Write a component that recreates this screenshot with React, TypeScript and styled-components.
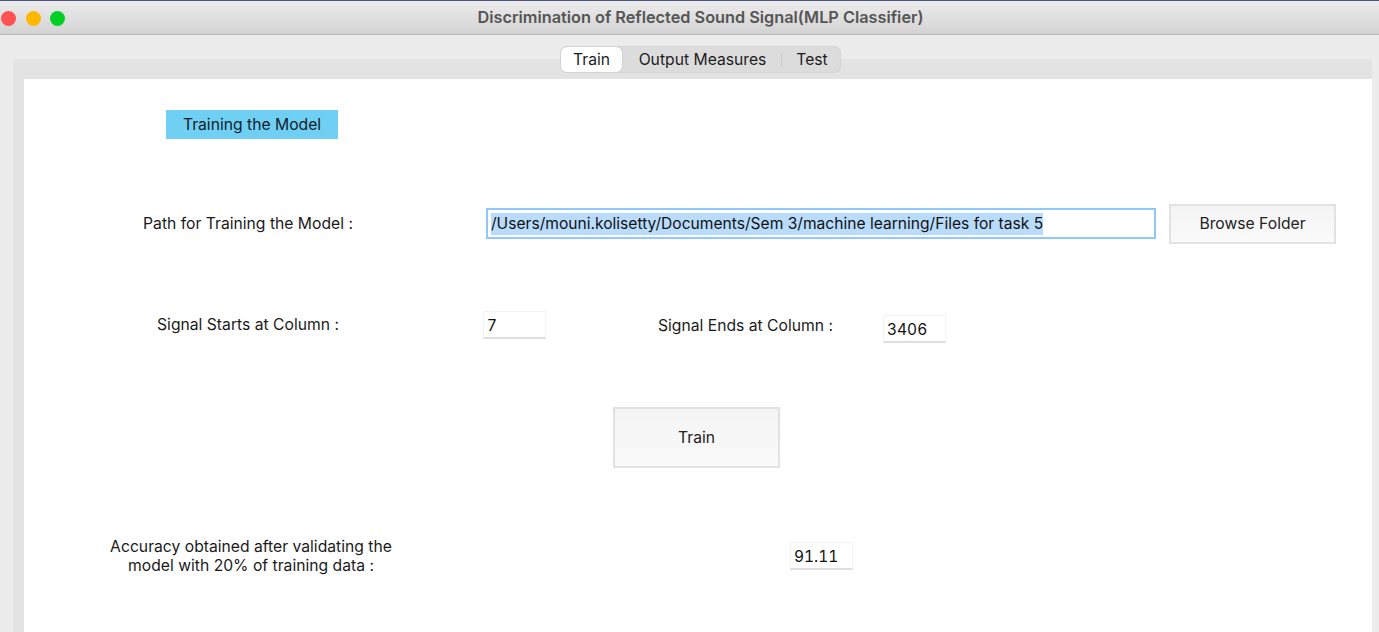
import React from "react";
import styled, { createGlobalStyle } from "styled-components";

const GlobalStyle = createGlobalStyle`
  html, body {
    margin: 0;
    padding: 0;
    height: 100%;
    overflow: hidden;
    background: #ececec;
  }
  #root {
    height: 100%;
  }
`;

const Window = styled.div`
  width: 1379px;
  height: 632px;
  display: flex;
  flex-direction: column;
  overflow: hidden;
  background: #ececec;
  font-family: Inter, "Liberation Sans", sans-serif;
  color: #1a1a1a;
`;

const TitleBar = styled.header`
  position: relative;
  flex: none;
  height: 35px;
  box-sizing: border-box;
  padding-left: 22px;
  display: flex;
  align-items: center;
  justify-content: center;
  border-top: 1px solid #4d5480;
  border-bottom: 1px solid #b9b9b9;
  background: linear-gradient(#ececec, #d3d3d3);
`;

const Lights = styled.div`
  position: absolute;
  left: 1px;
  top: 10px;
  display: flex;
  gap: 9.5px;
`;

const Light = styled.span<{ $color: string }>`
  width: 15px;
  height: 15px;
  border-radius: 50%;
  background: ${(p) => p.$color};
`;

const Title = styled.h1`
  margin: 0 0 1px;
  font-size: 16.3px;
  font-weight: 600;
  color: #555;
`;

const Content = styled.div`
  position: relative;
  flex: 1;
  min-height: 0;
  padding: 24px 7px 0 13px;
  display: flex;
`;

const TabPane = styled.section`
  flex: 1;
  padding: 20px 0 0 11px;
  border-radius: 4px 4px 0 0;
  background: #e3e3e3;
  display: flex;
`;

const Tabs = styled.nav`
  position: absolute;
  left: 561px;
  top: 11px;
  height: 27px;
  box-sizing: border-box;
  display: flex;
  align-items: center;
  border-radius: 7px;
  background: #dcdcdc;
  box-shadow: inset 0 0 0 1px #d6d6d6;
`;

const Tab = styled.button<{ $active?: boolean; $width: number; $divider?: boolean }>`
  position: relative;
  width: ${(p) => p.$width}px;
  height: 25px;
  padding: 0;
  border: 0;
  border-radius: 6px;
  font: inherit;
  font-size: 15.7px;
  color: #1c1c1c;
  background: ${(p) => (p.$active ? "#fff" : "transparent")};
  box-shadow: ${(p) => (p.$active ? "0 0 0 1px #d2d2d2" : "none")};

  ${(p) =>
    p.$divider &&
    `&::before {
      content: "";
      position: absolute;
      left: -2px;
      top: 6px;
      height: 14px;
      width: 1px;
      background: #cacaca;
    }`}
`;

const Panel = styled.main`
  flex: 1;
  background: #fff;
  padding-top: 31px;
  display: flex;
  flex-direction: column;
`;

const Heading = styled.div`
  align-self: flex-start;
  margin-left: 142px;
  width: 172px;
  height: 29px;
  display: flex;
  align-items: center;
  justify-content: center;
  background: #6fd0f3;
  font-size: 15.7px;
  color: #10202a;
`;

const Row = styled.div<{ $top: number; $height: number }>`
  margin-top: ${(p) => p.$top}px;
  height: ${(p) => p.$height}px;
  display: flex;
  align-items: flex-start;
`;

const Label = styled.div<{ $width: number; $pad?: number; $drop?: number }>`
  flex: none;
  width: ${(p) => p.$width}px;
  margin-left: ${(p) => p.$pad ?? 0}px;
  margin-top: ${(p) => p.$drop ?? 0}px;
  font-size: 15.7px;
  line-height: 19px;
  text-align: center;
  color: #1a1a1a;
`;

const PathField = styled.div`
  flex: none;
  margin: 4px 0 0 14px;
  width: 670px;
  height: 31px;
  box-sizing: border-box;
  padding: 1px 3px 0;
  border: 2px solid #8fc8fb;
  display: flex;
  align-items: center;
  font-size: 15.6px;
  white-space: nowrap;
`;

const Selected = styled.span`
  background: #b9dcfd;
  color: #111;
  line-height: 22px;
`;

const ValueBox = styled.div<{ $left: number; $drop?: number }>`
  flex: none;
  width: 63px;
  height: 28px;
  box-sizing: border-box;
  margin-left: ${(p) => p.$left}px;
  margin-top: ${(p) => p.$drop ?? 0}px;
  padding: 2px 0 0 3px;
  display: flex;
  align-items: center;
  font-size: 15.5px;
  font-feature-settings: "tnum";
  color: #111;
  background: #fff;
  border: 1px solid #f3f3f3;
  border-bottom: 2px solid #dedede;
`;

const PushButton = styled.button<{ $width: number; $height: number; $left: number; $lift: number }>`
  flex: none;
  width: ${(p) => p.$width}px;
  height: ${(p) => p.$height}px;
  margin-left: ${(p) => p.$left}px;
  padding: 0 0 ${(p) => p.$lift}px;
  border: 2px solid #e2e2e2;
  background: linear-gradient(#f4f4f4, #fafafa);
  font: inherit;
  font-size: 15.7px;
  color: #222;
`;

export default function App() {
  return (
    <Window>
      <GlobalStyle />
      <TitleBar>
        <Lights>
          <Light $color="#ff5254" />
          <Light $color="#ffb800" />
          <Light $color="#00cf26" />
        </Lights>
        <Title>Discrimination of Reflected Sound Signal(MLP Classifier)</Title>
      </TitleBar>
      <Content>
        <Tabs>
          <Tab $active $width={61}>Train</Tab>
          <Tab $width={161}>Output Measures</Tab>
          <Tab $width={58} $divider>Test</Tab>
        </Tabs>
        <TabPane>
          <Panel>
            <Heading>Training the Model</Heading>
            <Row $top={65} $height={40}>
              <Label $width={448} $drop={10}>Path for Training the Model :</Label>
              <PathField>
                <Selected>/Users/mouni.kolisetty/Documents/Sem 3/machine learning/Files for task 5</Selected>
              </PathField>
              <PushButton $width={167} $height={40} $left={13} $lift={2}>Browse Folder</PushButton>
            </Row>
            <Row $top={67} $height={32}>
              <Label $width={448} $drop={4}>Signal Starts at Column :</Label>
              <ValueBox $left={11}>7</ValueBox>
              <Label $width={175} $pad={112} $drop={5}>Signal Ends at Column :</Label>
              <ValueBox $left={50} $drop={4}>3406</ValueBox>
            </Row>
            <Row $top={64} $height={61}>
              <PushButton $width={167} $height={61} $left={589} $lift={0}>Train</PushButton>
            </Row>
            <Row $top={74} $height={40}>
              <Label $width={454} $drop={-5}>
                Accuracy obtained after validating the
                <br />
                model with 20% of training data :
              </Label>
              <ValueBox $left={312}>91.11</ValueBox>
            </Row>
          </Panel>
        </TabPane>
      </Content>
    </Window>
  );
}
